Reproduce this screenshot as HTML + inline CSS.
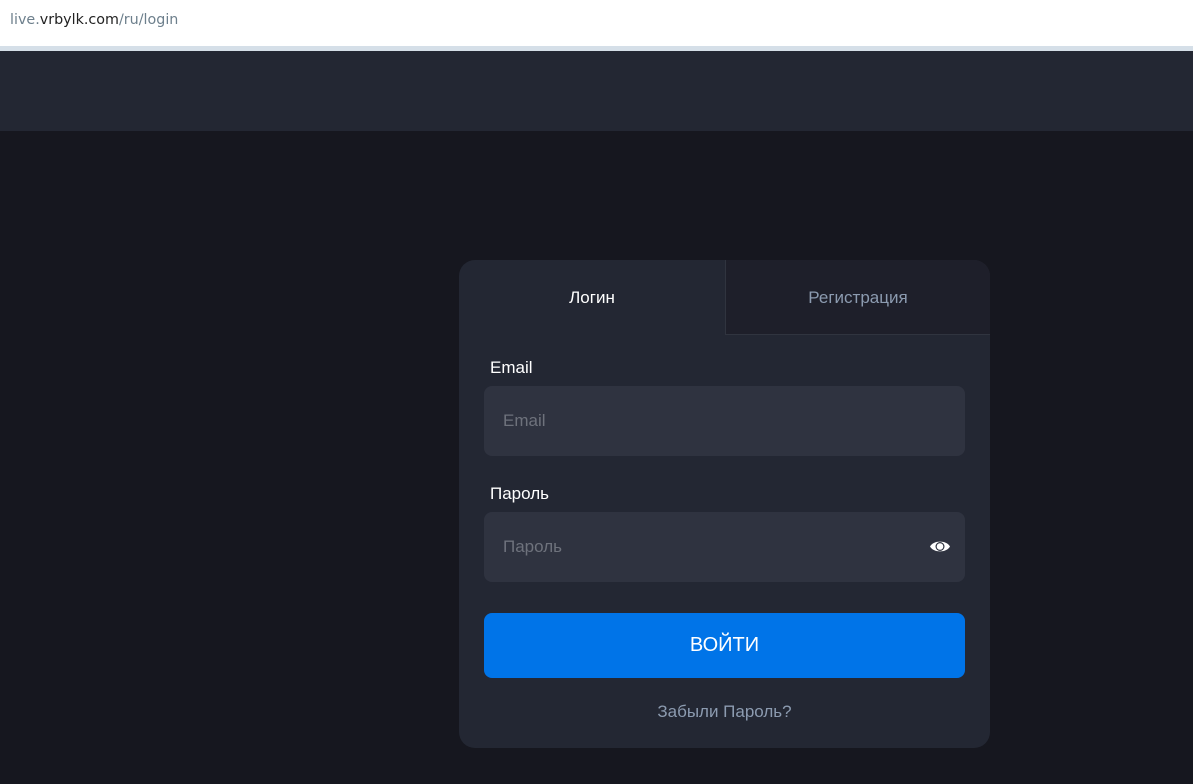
<!DOCTYPE html>
<html><head><meta charset="utf-8"><style>
*{box-sizing:border-box;margin:0;padding:0}
body{width:1193px;height:784px;background:#16171f;font-family:"Liberation Sans",sans-serif;position:relative;overflow:hidden}
.bar{position:absolute;left:0;top:0;width:1193px;height:46px;background:#fff;font-family:"DejaVu Sans","Liberation Sans",sans-serif;font-size:14.3px;color:#6d7f8c;padding:12px 0 0 10px}
.bar b{font-weight:normal;color:#222}
.line{position:absolute;top:46px;left:0;width:1193px;height:5px;background:#d5dfe8}
.hdr{position:absolute;top:51px;left:0;width:1193px;height:80px;background:#232733}
.card{position:absolute;left:459px;top:260px;width:531px;height:488px;background:#232733;border-radius:16px;overflow:hidden}
.tab{position:absolute;top:0;height:75px;line-height:75px;text-align:center;font-size:17px}
.t1{left:0;width:266px;color:#fff}
.t2{left:266px;width:265px;background:#1e1f2a;color:#8c9bb0;border-left:1px solid #30343f;border-bottom:1px solid #30343f}
.lbl{position:absolute;left:31px;color:#fff;font-size:17px}
.inp{position:absolute;left:25px;width:481px;height:70px;background:#2f3340;border-radius:8px;color:#6e727c;font-size:17px;padding-left:19px;line-height:70px}
.btn{position:absolute;left:25px;top:353px;width:481px;height:65px;background:#0074e8;border-radius:8px;color:#fff;font-size:20px;text-align:center;line-height:65px}
.fg{position:absolute;top:442px;width:100%;text-align:center;color:#8c9bb0;font-size:17px}
</style></head><body>
<div class="bar">live.<b>vrbylk.com</b>/ru/login</div>
<div class="line"></div>
<div class="hdr"></div>
<div class="card">
<div class="tab t1">Логин</div>
<div class="tab t2">Регистрация</div>
<div class="lbl" style="top:98px">Email</div>
<div class="inp" style="top:126px">Email</div>
<div class="lbl" style="top:224px">Пароль</div>
<div class="inp" style="top:252px">Пароль
<svg style="position:absolute;left:445px;top:27px" width="22" height="15" viewBox="0 0 22 15"><path d="M1 7.5C4.5 1 17.5 1 21 7.5C17.5 14 4.5 14 1 7.5Z" fill="#fff"/><circle cx="11" cy="7.5" r="4.5" fill="#2f3340"/><circle cx="11" cy="7.5" r="3.3" fill="#fff"/></svg></div>
<div class="btn">ВОЙТИ</div>
<div class="fg">Забыли Пароль?</div>
</div>
</body></html>
